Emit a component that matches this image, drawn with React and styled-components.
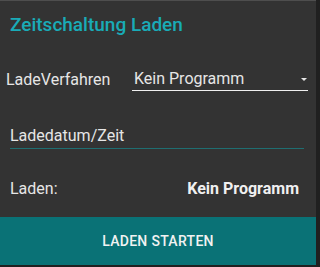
import React from "react";
import styled, { createGlobalStyle } from "styled-components";

const Global = createGlobalStyle`
  html, body { margin: 0; padding: 0; background: #202020; }
  body { font-family: Roboto, "Noto Sans", sans-serif; }
`;

const Card = styled.div`
  width: 316px;
  height: 264px;
  background: #333333;
  border-top: 1px solid #4e4e4e;
  display: flex;
  flex-direction: column;
  color: #e6e6e6;
`;

const Title = styled.h2`
  margin: 0;
  padding: 12px 10px 0;
  font-size: 19px;
  line-height: 24px;
  font-weight: 500;
  color: #19abb7;
`;

const SelectRow = styled.div`
  display: flex;
  align-items: flex-start;
  margin-top: 30px;
  padding: 0 8px 0 6px;
`;

const Label = styled.span`
  width: 126px;
  font-size: 16px;
  line-height: 26px;
`;

const Select = styled.div`
  flex: 1;
  display: flex;
  align-items: center;
  height: 23px;
  border-bottom: 1px solid #f0f0f0;
  padding-left: 2px;
  font-size: 16px;
  line-height: 23px;
`;

const SelectValue = styled.span`
  flex: 1;
`;

const Arrow = styled.span`
  width: 0;
  height: 0;
  border-left: 3px solid transparent;
  border-right: 3px solid transparent;
  border-top: 3px solid #e6e6e6;
  margin-right: 1px;
  margin-top: 1px;
`;

const Field = styled.div`
  margin: 33px 12px 0 10px;
  padding-bottom: 2px;
  border-bottom: 1px solid #1f6e71;
  font-size: 16px;
  line-height: 20px;
`;

const InfoRow = styled.div`
  display: flex;
  justify-content: space-between;
  margin-top: 30px;
  padding: 0 17px 0 10px;
  font-size: 16px;
  line-height: 20px;
`;

const Strong = styled.span`
  font-weight: 700;
  color: #f0f0f0;
`;

const Button = styled.button`
  margin-top: auto;
  height: 48px;
  border: none;
  background: #0a7276;
  color: #f2f2f2;
  font-family: Roboto, "Noto Sans", sans-serif;
  font-size: 14px;
  font-weight: 500;
  letter-spacing: 0.3px;
  text-transform: uppercase;
  padding: 0;
`;

export default function App() {
  return (
    <>
      <Global />
      <Card>
        <Title>Zeitschaltung Laden</Title>
        <SelectRow>
          <Label>LadeVerfahren</Label>
          <Select>
            <SelectValue>Kein Programm</SelectValue>
            <Arrow />
          </Select>
        </SelectRow>
        <Field>Ladedatum/Zeit</Field>
        <InfoRow>
          <span>Laden:</span>
          <Strong>Kein Programm</Strong>
        </InfoRow>
        <Button>Laden starten</Button>
      </Card>
    </>
  );
}
